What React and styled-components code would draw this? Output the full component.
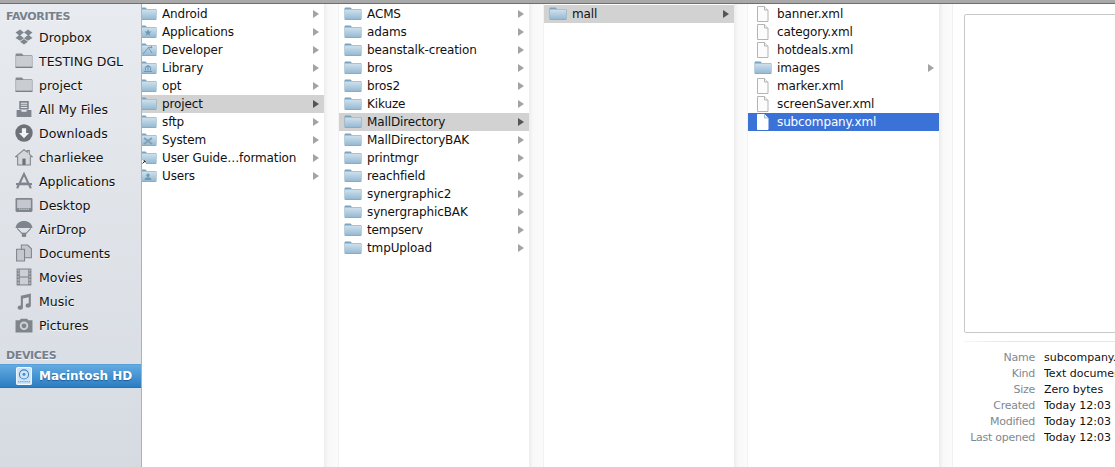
import React from "react";
import styled, { createGlobalStyle } from "styled-components";

const Global = createGlobalStyle`
  html, body { margin: 0; padding: 0; background: #fff; }
  body { font-family: "DejaVu Sans", "Liberation Sans", sans-serif; overflow: hidden; }
`;

const Win = styled.div`
  width: 1115px; height: 467px; display: flex; flex-direction: column; overflow: hidden;
`;
const TopEdge = styled.div`
  height: 4px; flex: none; background: #a9a9a9; border-bottom: 1px solid #6f6f6f; box-sizing: border-box;
`;
const Body = styled.div`
  flex: 1; display: flex; min-height: 0;
`;
const Sidebar = styled.aside`
  width: 141px; flex: none; box-sizing: border-box; padding-top: 6px;
  background: linear-gradient(#e8ebef, #d6dbe2);
`;
const SideDivider = styled.div`
  width: 1px; flex: none; background: #aeb1b5;
`;
const SectionHead = styled.div`
  height: 14px; line-height: 14px; padding-left: 6px; margin-top: ${p => p.$mt || 0}px;
  font-size: 11px; font-weight: 700; color: #76808c; text-shadow: 0 1px 0 #f4f6f8;
  letter-spacing: -0.35px;
`;
const SideList = styled.div`
  margin-top: 1px;
`;
const SideRow = styled.div`
  height: 24px; display: flex; align-items: center; gap: 6px; padding-left: 15px;
  font-size: 12.5px; color: #111; text-shadow: 0 1px 0 #f4f6f8; white-space: nowrap;
`;
const SideSelected = styled(SideRow)`
  margin-top: 1px; color: #fff; font-weight: 700; font-size: 12px; letter-spacing: -0.05px;
  text-shadow: 0 1px 1px #1c5a94;
  background: linear-gradient(#63abe2, #2b7dc2);
  border-top: 1px solid #5a9fd8; border-bottom: 1px solid #2a72b4; box-sizing: border-box;
`;
const SideIcon = styled.svg`
  width: 18px; height: 18px; flex: none; color: #7f858d;
`;
const Column = styled.div`
  width: ${p => p.$w}px; flex: none; padding-top: 1px; background: #fff; box-sizing: border-box;
  overflow: hidden;
`;
const Gutter = styled.div`
  width: ${p => p.$w || 15}px; flex: none; box-sizing: border-box;
  background: linear-gradient(90deg, #ececec 0, #f8f8f8 4px, #fbfbfb 100%);
  border-right: 1px solid #f1f1f1;
`;
const Row = styled.div`
  height: 18px; display: flex; align-items: center; box-sizing: border-box;
  padding-left: ${p => p.$indent}px; padding-right: 5px; gap: 5px;
  font-size: 12px; letter-spacing: -0.12px; white-space: nowrap; color: ${p => (p.$active ? "#fff" : "#111")};
  background: ${p => (p.$active ? "#3a72d7" : p.$sel ? "#d2d2d2" : "transparent")};
`;
const Name = styled.span`
  flex: 1; min-width: 0;
`;
const Arrow = styled.i`
  width: 0; height: 0; flex: none; border-style: solid; border-width: 4px 0 4px 6px;
  border-color: transparent transparent transparent ${p => (p.$sel ? "#555" : "#a3a3a3")};
`;
const Preview = styled.div`
  flex: 1; min-width: 0; padding: 10px 0 0 11px; background: #fff; overflow: hidden;
`;
const Card = styled.div`
  height: 319px; margin-right: -4px; box-sizing: border-box;
  background: #fff; border: 1px solid #c9c9c9; border-radius: 2px;
`;
const Sep = styled.div`
  height: 1px; margin-top: 8px; background: linear-gradient(90deg, #f6f6f6, #e6e6e6 30%, #e6e6e6);
`;
const Info = styled.dl`
  margin: 8px 0 0 1px; display: grid; grid-template-columns: 70px 90px; column-gap: 9px;
  grid-auto-rows: 16px; font-size: 11px; line-height: 16px; white-space: nowrap;
`;
const Key = styled.dt`
  text-align: right; color: #808890; letter-spacing: -0.25px;
`;
const Val = styled.dd`
  margin: 0; color: #111; overflow: hidden;
`;

const FolderSvg = styled.svg`
  width: 18px; height: 16px; flex: none;
`;
const DocSvg = styled.svg`
  width: 13px; height: 16px; flex: none; margin-right: 3px;
`;

const badges = {
  apps: <path d="M9 6l1 2.600h2.600l-2.100 1.600.800 2.500L9 11.200l-2.300 1.500.800-2.500-2.100-1.600H8z" fill="#6f97b4" />,
  dev: <path d="M4 13l6-7 3 1-1-2.500M9 6l4 6" fill="none" stroke="#6f97b4" strokeWidth="1" />,
  lib: <path d="M5 13h8v-1H5zM9 6L5 8.500h8zM6 9h1v2.500H6zM8.500 9h1v2.500h-1zM11 9h1v2.500h-1z" fill="#6f97b4" />,
  sys: <path d="M5 7l8 6M13 7l-8 6" stroke="#7fa0b8" strokeWidth="2" fill="none" />,
  user: <path d="M9 6.500a1.700 1.700 0 110 3.400 1.700 1.700 0 010-3.400zM5.500 13c.3-2 1.700-2.700 3.500-2.700s3.200.7 3.500 2.700z" fill="#6f97b4" />,
};

function Folder({ badge, alias }) {
  return (
    <FolderSvg viewBox="0 1 18 16">
      <defs>
        <linearGradient id="fg" x1="0" y1="0" x2="0" y2="1">
          <stop offset="0" stopColor="#cfe2ee" />
          <stop offset="1" stopColor="#93b8d0" />
        </linearGradient>
      </defs>
      <path d="M1.500 2.500h5l1.500 1.500h8.500a1 1 0 011 1v9a1 1 0 01-1 1h-15a1 1 0 01-1-1V3.500a1 1 0 011-1z" fill="#7ba3bd" />
      <rect x="1" y="4.500" width="16" height="10" rx=".5" fill="url(#fg)" />
      {badges[badge]}
      {alias && <path d="M3 11h4v4H3z" fill="#fff" />}
      {alias && <path d="M3.500 14.500l2.500-2.500M4.500 11.800H6.200v1.700" stroke="#222" strokeWidth="1" fill="none" />}
    </FolderSvg>
  );
}

function Doc({ active }) {
  return (
    <DocSvg viewBox="0 0 13 16">
      <path d="M1.500.5h7l3.500 3.500v11.500h-10.500z" fill={active ? "#fff" : "#fcfcfc"} stroke={active ? "#fff" : "#b4b4b4"} />
      <path d="M8.500.5v3.500h3.500" fill={active ? "#dfe8f8" : "#f2f2f2"} stroke={active ? "#9db8e8" : "#b4b4b4"} />
    </DocSvg>
  );
}

const side = {
  dropbox: <path fill="currentColor" d="M4.800 1.500L.5 4.300l3.200 2.500L.5 9.400l4.300 2.700 3.700-2.500-3.500-2.800 3.500-2.500zM12.200 1.500l4.300 2.800-3.200 2.500 3.200 2.600-4.300 2.700-3.700-2.500 3.500-2.800-3.500-2.500zM4.800 12.900l3.700 2.600 3.700-2.600-3.700-2.400z" />,
  folder: <g><path d="M1.500 1.500h5l1.500 1.500h7.500a1 1 0 011 1v10.500H.5V2.500a1 1 0 011-1z" fill="#868b92" /><rect x="1" y="3.800" width="15" height="10.200" fill="#c9ccd1" /><rect x=".5" y="14" width="16" height="1" fill="#6f747b" /></g>,
  files: <g fill="currentColor"><path d="M4 1h9v8H4zM1.500 9.500H6v1.500h5V9.500h4.500V16h-14z" /><path stroke="#e6e8ec" d="M5.500 3h6M5.500 5h6M5.500 7h6" /></g>,
  download: <g><circle cx="8.500" cy="8.500" r="8.200" fill="#6d7279" /><path d="M6.500 4h4v4.500h2.800l-4.800 5-4.800-5h2.800z" fill="#f2f3f5" /></g>,
  home: <g><path fill="#d4d7dc" stroke="#7f858d" d="M8.500 1.500l3 2.500V2.500h2v3.200l2.800 2.500H14.500V16h-12V8.200H.7z" /><path fill="#6d7279" d="M7 10h3v6H7z" /></g>,
  apps: <path fill="none" stroke="currentColor" strokeWidth="2" d="M2 15.500L8.500 2l6.500 13.500M5 11h7M1 11.500h15" />,
  desktop: <g><rect x=".5" y="2" width="16" height="13" rx="1" fill="#7f858d" /><rect x="2" y="3.500" width="13" height="8" fill="#c4c8ce" /><path d="M4 12.500h9" stroke="#e8eaed" strokeDasharray="1 1" /></g>,
  airdrop: <g fill="currentColor"><path d="M.5 7.500C1 3.500 4.500 1 8.500 1s7.500 2.500 8 6.500z" /><path d="M2 8l5 5M15 8l-5 5" stroke="currentColor" strokeWidth="1" /><rect x="6.500" y="12" width="4" height="4" /></g>,
  docs: <g fill="#c4c7cd" stroke="#7f858d"><path d="M1.500 5H9v11H1.500z" /><path d="M6 1h6l3.500 3.500V13H9V5H6z" /></g>,
  movies: <g><rect x="1.500" y=".5" width="14" height="16" fill="#7f858d" /><rect x="4.500" y="1.500" width="8" height="6.500" fill="#ccd0d5" /><rect x="4.500" y="9" width="8" height="6.500" fill="#ccd0d5" /><path stroke="#ccd0d5" strokeDasharray="1.500 1.500" d="M3 1.500v14M14 1.500v14" /></g>,
  music: <path fill="currentColor" d="M5.500 3.500L15 1.500v11.300a2.500 2 0 11-2-2V5L7.500 6.200v8.600a2.500 2 0 11-2-2z" />,
  pictures: <g><path d="M.5 4h4l1-1.500h6L12.500 4h4v11.500H.5z" fill="#7f858d" /><circle cx="8.500" cy="9.300" r="4" fill="#ced1d6" /><circle cx="8.500" cy="9.300" r="2.300" fill="#7f858d" /></g>,
  hd: <g><rect x="1.500" y=".5" width="14" height="16" rx="1" fill="#cfe4f6" stroke="#f3f9fe" /><circle cx="8.500" cy="7" r="4.300" fill="none" stroke="#3c86c6" /><circle cx="8.500" cy="7" r="1.300" fill="#3c86c6" /><path d="M3 14h11" stroke="#3c86c6" strokeDasharray="1 1" /></g>,
};

const favorites = [
  ["dropbox", "Dropbox"], ["folder", "TESTING DGL"], ["folder", "project"], ["files", "All My Files"],
  ["download", "Downloads"], ["home", "charliekee"], ["apps", "Applications"], ["desktop", "Desktop"],
  ["airdrop", "AirDrop"], ["docs", "Documents"], ["movies", "Movies"], ["music", "Music"], ["pictures", "Pictures"],
];

const col1 = [
  { n: "Android" }, { n: "Applications", b: "apps" }, { n: "Developer", b: "dev" }, { n: "Library", b: "lib" },
  { n: "opt" }, { n: "project", sel: 1 }, { n: "sftp" }, { n: "System", b: "sys" },
  { n: "User Guide…formation", alias: 1 }, { n: "Users", b: "user" },
];
const col2 = ["ACMS", "adams", "beanstalk-creation", "bros", "bros2", "Kikuze", "MallDirectory", "MallDirectoryBAK",
  "printmgr", "reachfield", "synergraphic2", "synergraphicBAK", "tempserv", "tmpUpload"].map(n => ({ n, sel: n === "MallDirectory" }));
const col3 = [{ n: "mall", sel: 1 }];
const col4 = [
  { n: "banner.xml", doc: 1 }, { n: "category.xml", doc: 1 }, { n: "hotdeals.xml", doc: 1 }, { n: "images" },
  { n: "marker.xml", doc: 1 }, { n: "screenSaver.xml", doc: 1 }, { n: "subcompany.xml", doc: 1, active: 1 },
];

const info = [
  ["Name", "subcompany.xml"], ["Kind", "Text document"], ["Size", "Zero bytes"],
  ["Created", "Today 12:03 PM"], ["Modified", "Today 12:03 PM"], ["Last opened", "Today 12:03 PM"],
];

const FolderShift = styled.span`
  display: flex; flex: none; margin-left: ${p => p.$shift}px;
`;

function Browser({ rows, w, indent, docIndent, shift = 0 }) {
  return (
    <Column $w={w}>
      {rows.map(r => (
        <Row key={r.n} $sel={r.sel} $active={r.active} $indent={r.doc ? docIndent : indent}>
          {r.doc ? <Doc active={r.active} /> : <FolderShift $shift={shift}><Folder badge={r.b} alias={r.alias} /></FolderShift>}
          <Name>{r.n}</Name>
          {!r.doc && <Arrow $sel={r.sel} />}
        </Row>
      ))}
    </Column>
  );
}

export default function App() {
  return (
    <Win>
      <Global />
      <TopEdge />
      <Body>
        <Sidebar>
          <SectionHead>FAVORITES</SectionHead>
          <SideList>
            {favorites.map(([k, t]) => (
              <SideRow key={t}><SideIcon viewBox="0 0 17 17">{side[k]}</SideIcon>{t}</SideRow>
            ))}
          </SideList>
          <SectionHead $mt={12}>DEVICES</SectionHead>
          <SideSelected><SideIcon viewBox="0 0 17 17">{side.hd}</SideIcon>Macintosh HD</SideSelected>
        </Sidebar>
        <SideDivider />
        <Browser rows={col1} w={182} indent={0} shift={-3} />
        <Gutter $w={15} />
        <Browser rows={col2} w={190} indent={5} />
        <Gutter $w={15} />
        <Browser rows={col3} w={190} indent={5} />
        <Gutter $w={14} />
        <Browser rows={col4} w={191} indent={6} docIndent={8} />
        <Gutter $w={14} />
        <Preview>
          <Card />
          <Sep />
          <Info>
            {info.map(([k, v]) => (
              <React.Fragment key={k}>
                <Key>{k}</Key>
                <Val>{v}</Val>
              </React.Fragment>
            ))}
          </Info>
        </Preview>
      </Body>
    </Win>
  );
}
